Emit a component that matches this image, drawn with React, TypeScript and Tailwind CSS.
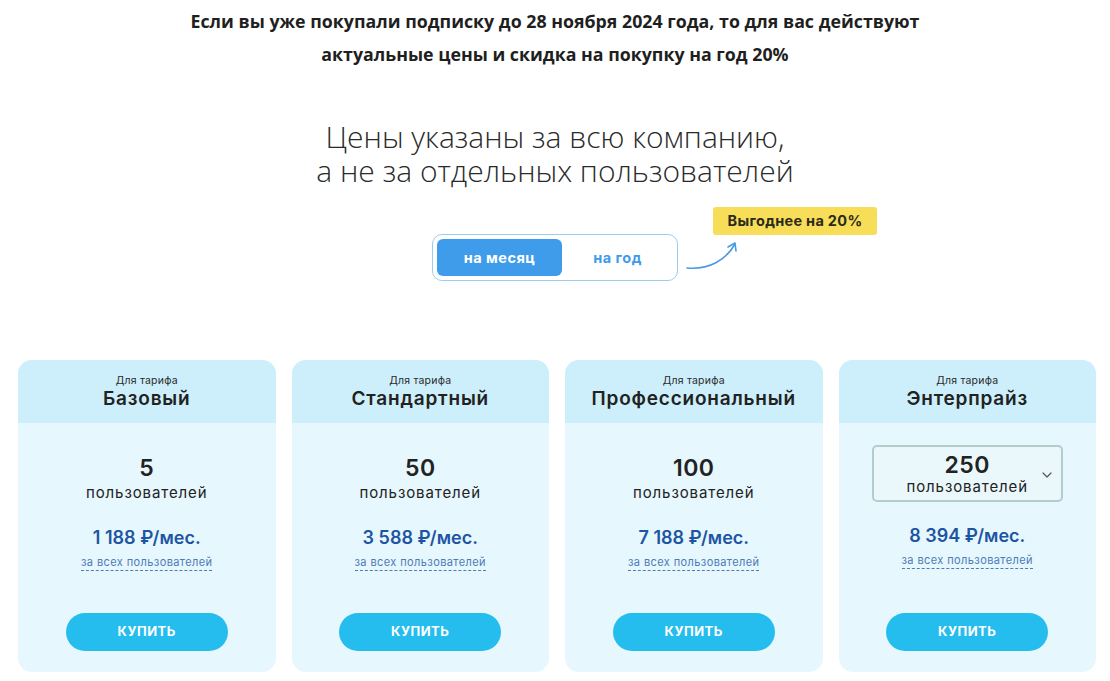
import { ChevronDown } from "lucide-react";

const plans = [
  { name: "Базовый", users: "5", price: "1 188", select: false },
  { name: "Стандартный", users: "50", price: "3 588", select: false },
  { name: "Профессиональный", users: "100", price: "7 188", select: false },
  { name: "Энтерпрайз", users: "250", price: "8 394", select: true },
];

function PlanCard({ plan }: { plan: (typeof plans)[number] }) {
  return (
    <div className="flex h-[312px] flex-col overflow-hidden rounded-[14px] bg-[#e6f7fd] font-['Inter',sans-serif]">
      <div className="flex h-[63px] flex-col items-center justify-center bg-[#cdeffc] pt-[2px]">
        <p className="text-[10.5px] leading-[12px] tracking-[0.2px] text-[#2b2b2b]">Для тарифа</p>
        <p className="text-[19px] font-semibold leading-[24px] tracking-[0.8px] text-[#222]">
          {plan.name}
        </p>
      </div>
      <div className="flex flex-1 flex-col items-center">
        {plan.select ? (
          <div className="relative mt-[22px] flex h-[57px] w-[191px] flex-col items-center justify-center rounded-[5px] border-2 border-[#b3cccc] bg-[#eaf8fc]">
            <p className="text-[23px] font-semibold leading-[26px] tracking-[0.5px] text-[#222]">{plan.users}</p>
            <p className="text-[15px] leading-[18px] tracking-[0.9px] text-[#222]">пользователей</p>
            <ChevronDown className="absolute right-[6px] top-[20px] h-4 w-4 text-[#555]" strokeWidth={1.8} />
          </div>
        ) : (
          <div className="mt-[31px] flex flex-col items-center">
            <p className="text-[23px] font-semibold leading-[28px] tracking-[0.5px] text-[#222]">{plan.users}</p>
            <p className="text-[15px] leading-[22px] tracking-[0.9px] text-[#222]">пользователей</p>
          </div>
        )}
        <p className="mt-[22px] text-[18px] font-semibold leading-[24px] text-[#1d55a3]">
          {plan.price} ₽/мес.
        </p>
        <p className="mt-[5px] border-b border-dashed border-[#4d7bb8] text-[11px] leading-[15px] tracking-[0.4px] text-[#4d7bb8]">
          за всех пользователей
        </p>
        <button
          type="button"
          className="mt-auto mb-[21px] h-[38px] w-[162px] rounded-full bg-[#25bcee] text-[13px] font-bold tracking-[0.5px] text-white"
        >
          КУПИТЬ
        </button>
      </div>
    </div>
  );
}

export default function App() {
  return (
    <div className="min-h-[681px] w-[1110px] bg-white">
      <div className="pt-[5px] text-center font-['Open_Sans',sans-serif] text-[17.8px] font-bold leading-[33px] text-[#1f1f1f]">
        <p>Если вы уже покупали подписку до 28 ноября 2024 года, то для вас действуют</p>
        <p>актуальные цены и скидка на покупку на год 20%</p>
      </div>

      <h1 className="mt-[49px] text-center font-['Open_Sans',sans-serif] text-[30px] font-light leading-[34px] text-[#2a2a2a]">
        Цены указаны за всю компанию,
        <br />
        а не за отдельных пользователей
      </h1>

      <div className="relative mt-[46px] flex justify-center">
        <div className="flex h-[47px] w-[246px] items-center rounded-[10px] border border-[#9ccdef] p-[4px] font-['Inter',sans-serif]">
          <button
            type="button"
            className="h-[37px] w-[125px] rounded-[6px] bg-[#3f9ceb] text-[14.5px] font-bold tracking-[0.5px] text-white"
          >
            на месяц
          </button>
          <button type="button" className="h-[37px] flex-1 text-[14.5px] font-bold tracking-[0.5px] text-[#3f9ceb]">
            на год
          </button>
        </div>
        <svg
          className="absolute left-[684px] top-[2px]"
          width="60"
          height="36"
          viewBox="0 0 60 36"
          fill="none"
        >
          <path d="M3 32 C 25 34, 42 24, 51 8" stroke="#4a9be3" strokeWidth="1.6" strokeLinecap="round" />
          <path d="M44 11 L51 7 L52 15" stroke="#4a9be3" strokeWidth="1.6" strokeLinecap="round" strokeLinejoin="round" />
        </svg>
        <div className="absolute left-[713px] top-[-27px] flex h-[28px] w-[164px] items-center justify-center rounded-[3px] bg-[#f8de58] font-['Inter',sans-serif] text-[14.5px] font-bold tracking-[0.3px] text-[#2a2a1a]">
          Выгоднее на 20%
        </div>
      </div>

      <div className="ml-[18px] mt-[79px] grid w-[1078px] grid-cols-4 gap-[16px]">
        {plans.map((plan) => (
          <PlanCard key={plan.name} plan={plan} />
        ))}
      </div>
    </div>
  );
}
